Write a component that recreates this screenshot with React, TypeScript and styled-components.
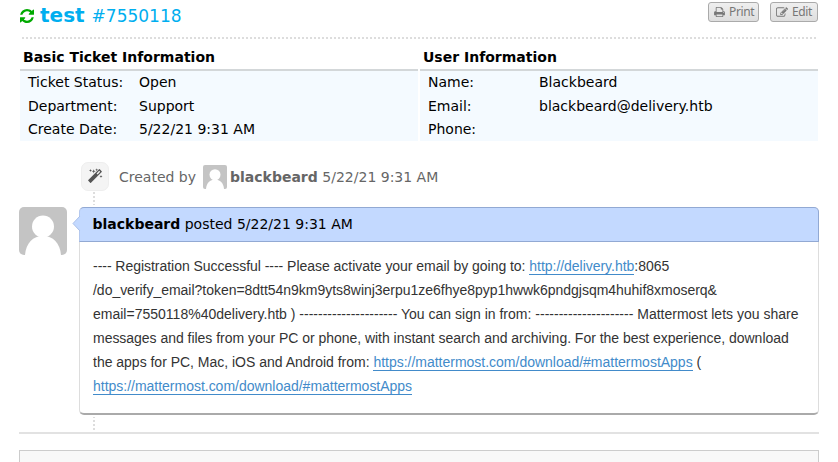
import React from 'react';
import styled, { createGlobalStyle } from 'styled-components';

const Global = createGlobalStyle`
  * { box-sizing: border-box; }
  body { margin: 0; background: #fff; color: #000; overflow: hidden; font: 14px/20px "DejaVu Sans", sans-serif; }
`;

const Page = styled.main`
  width: 838px;
  height: 462px;
  overflow: hidden;
  padding: 0 19px;
`;
const Header = styled.header`
  display: flex;
  align-items: flex-start;
  height: 37px;
`;
const RefreshIcon = styled.svg`
  width: 14px;
  height: 14px;
  margin: 9px 6px 0 1px;
  fill: #0a0;
`;
const Title = styled.h1`
  flex: 1;
  display: flex;
  align-items: baseline;
  gap: 7px;
  margin: 0;
  color: #00aeef;
  font-size: 20px;
  line-height: 30px;
`;
const TicketNumber = styled.small`
  font-size: 17px;
  font-weight: 400;
`;
const Button = styled.button<{ $width: number; $iconWidth: number }>`
  display: flex;
  align-items: center;
  width: ${(p) => p.$width}px;
  height: 20px;
  margin: 2px 1px 0 10px;
  padding: 0 0 0 5px;
  gap: 4px;
  border: 1px solid #aaa;
  border-radius: 3px;
  background: linear-gradient(#efefef, #dedede);
  color: #777;
  font: 12px/18px "Noto Sans", sans-serif;
  letter-spacing: -0.350px;
  svg { width: ${(p) => p.$iconWidth}px; height: 10px; margin-top: -1px; fill: currentColor; flex: none; }
`;
const DottedRule = styled.div`
  height: 2px;
  margin: 0 2px 0 3px;
  background: repeating-linear-gradient(90deg, #ddd 0 2px, transparent 2px 4px);
`;
const InfoGrid = styled.section`
  display: grid;
  grid-template-columns: 398px 398px;
  gap: 2px;
  margin: 8px 0 0 1px;
`;
const InfoTitle = styled.h2`
  height: 24px;
  margin: 0;
  padding-left: 3px;
  border-bottom: 2px solid #d3d7d9;
  font-size: 14px;
  line-height: 20px;
`;
const InfoList = styled.dl`
  display: grid;
  grid-template-columns: 111px 1fr;
  grid-template-rows: 24px 23px 23px;
  margin: 0;
  padding-left: 8px;
  background: #f4faff;
  line-height: 23px;
  dd { margin: 0; }
`;
const EventRow = styled.div`
  display: flex;
  align-items: center;
  height: 30px;
  margin: 21px 0 0 62px;
  color: #666;
  strong { margin: 0 4.500px 0 3px; }
`;
const EventBadge = styled.span`
  display: flex;
  align-items: center;
  justify-content: center;
  width: 28px;
  height: 29px;
  margin: -2px 10px 0 0;
  border: 1px solid #eee;
  border-radius: 7px;
  background: #f4f4f4;
  svg { width: 16px; height: 16px; fill: #555; margin-top: -1px; }
`;
const SmallAvatar = styled.svg`
  width: 24px;
  height: 24px;
  margin-left: 7px;
  border-radius: 2px;
`;
const ThreadLine = styled.div<{ $height: number; $top: number; $shift?: number }>`
  width: 2px;
  height: ${(p) => p.$height}px;
  margin: ${(p) => p.$top}px 0 0 74px;
  background: repeating-linear-gradient(#ddd 0 2px, transparent 2px 4px);
  background-position-y: ${(p) => p.$shift ?? 0}px;
`;
const Entry = styled.article`
  display: flex;
  align-items: flex-start;
  margin-top: 2px;
`;
const Avatar = styled.svg`
  width: 48px;
  height: 48px;
  margin-right: 12px;
  border-radius: 5px;
`;
const Message = styled.div`
  position: relative;
  width: 740px;
  height: 208px;
  border: 1px solid #ddd;
  border-top: 0;
  border-bottom: 2px solid #aaa;
  border-radius: 5px;
`;
const MessageHeader = styled.header`
  height: 35px;
  margin: 0 -1px;
  padding-left: 12.500px;
  border: 1px solid #92a9d3;
  border-left-color: #b4c8ee;
  border-radius: 5px 5px 0 0;
  background: #c3d9ff;
  line-height: 33px;
`;
const Pointer = styled.svg`
  position: absolute;
  left: -8px;
  top: 8px;
  width: 9px;
  height: 17px;
`;
const MessageBody = styled.div`
  padding: 12px 0 0 13px;
  color: #333;
  font: 14px/24px "Liberation Sans", sans-serif;
`;
const Line = styled.div<{ $spacing?: number }>`
  white-space: pre;
  letter-spacing: ${(p) => p.$spacing ?? 0}px;
`;
const Link = styled.a`
  color: #428bca;
  border-bottom: 1px solid #428bca;
  text-decoration: none;
`;
const Divider = styled.hr`
  height: 2px;
  margin: 2px 0 16px;
  border: 0;
  background: #e2e2e2;
`;
const ReplyPanel = styled.div`
  height: 30px;
  border: 1px solid #ccc;
  background: #f8f8f8;
`;

const Person = () => (
  <>
    <rect width="48" height="48" fill="#c4c4c4" />
    <circle cx="24" cy="19.5" r="11" fill="#fff" />
    <path d="M6 48C7 36 14 29 24 29s17 7 18 19z" fill="#fff" />
  </>
);

export default function App() {
  return (
    <>
      <Global />
      <Page>
        <Header>
          <RefreshIcon viewBox="0 0 1536 1536">
            <path d="M1511 928q0 5-1 7-64 268-268 434.5t-478 166.5q-146 0-282.5-55t-243.5-157l-129 129q-19 19-45 19t-45-19-19-45v-448q0-26 19-45t45-19h448q26 0 45 19t19 45-19 45l-137 137q71 66 161 102t187 36q134 0 250-65t186-179q11-17 53-117 8-23 30-23h192q13 0 22.500 9.500t9.500 22.500zm25-800v448q0 26-19 45t-45 19h-448q-26 0-45-19t-19-45 19-45l138-138q-148-137-349-137-134 0-250 65t-186 179q-11 17-53 117-8 23-30 23h-199q-13 0-22.500-9.500t-9.500-22.500v-7q65-268 270-434.500t480-166.500q146 0 284 55.500t245 156.500l130-129q19-19 45-19t45 19 19 45z" />
          </RefreshIcon>
          <Title>test <TicketNumber>#7550118</TicketNumber></Title>
          <Button $width={51} $iconWidth={11}>
            <svg viewBox="64 128 1664 1536"><path d="M448 1536h896v-256h-896v256zm0-640h896v-384h-160q-40 0-68-28t-28-68v-160h-640v640zm1152 64q0-26-19-45t-45-19-45 19-19 45 19 45 45 19 45-19 19-45zm128 0v416q0 13-9.500 22.500t-22.500 9.500h-224v160q0 40-28 68t-68 28h-960q-40 0-68-28t-28-68v-160h-224q-13 0-22.500-9.500t-9.500-22.500v-416q0-79 56.500-135.500t135.500-56.500h64v-544q0-40 28-68t68-28h672q40 0 88 20t76 48l152 152q28 28 48 76t20 88v256h64q79 0 135.500 56.500t56.500 135.500z" /></svg>
            Print
          </Button>
          <Button $width={48} $iconWidth={12}>
            <svg viewBox="0 128 1792 1408"><path d="M888 1184l116-116-152-152-116 116v56h96v96h56zm440-720q-16-16-33 1l-350 350q-17 17-1 33t33-1l350-350q17-17 1-33zm80 594v190q0 119-84.500 203.500t-203.500 84.500h-832q-119 0-203.500-84.500t-84.500-203.500v-832q0-119 84.500-203.500t203.500-84.500h832q63 0 117 25 15 7 18 23 3 17-9 29l-49 49q-14 14-32 8-23-6-45-6h-832q-66 0-113 47t-47 113v832q0 66 47 113t113 47h832q66 0 113-47t47-113v-126q0-13 9-22l64-64q15-15 35-7t20 29zm-96-738l288 288-672 672h-288v-288zm444 132l-92 92-288-288 92-92q28-28 68-28t68 28l152 152q28 28 28 68t-28 68z" /></svg>
            Edit
          </Button>
        </Header>
        <DottedRule />
        <InfoGrid>
          <div>
            <InfoTitle>Basic Ticket Information</InfoTitle>
            <InfoList>
              <dt>Ticket Status:</dt><dd>Open</dd>
              <dt>Department:</dt><dd>Support</dd>
              <dt>Create Date:</dt><dd>5/22/21 9:31 AM</dd>
            </InfoList>
          </div>
          <div>
            <InfoTitle>User Information</InfoTitle>
            <InfoList>
              <dt>Name:</dt><dd>Blackbeard</dd>
              <dt>Email:</dt><dd>blackbeard@delivery.htb</dd>
              <dt>Phone:</dt><dd />
            </InfoList>
          </div>
        </InfoGrid>
        <EventRow>
          <EventBadge>
            <svg viewBox="0 0 16 16">
              <path fillRule="evenodd" d="M12.800 1.300l1.900 1.900q.4.400 0 .8L4 14.700q-.4.400-.8 0l-1.900-1.900q-.4-.4 0-.8L12 1.300q.4-.4.800 0zM9.600 5.400l1 1L13.200 3.800l-1-1z" />
              <path d="M3.500 1l.4 1.100L5 2.500l-1.100.4L3.500 4l-.4-1.100L2 2.500l1.100-.4zM6.700 1.200l.5 1.600 1.600.5-1.600.5-.5 1.600-.5-1.600-1.600-.5 1.600-.5zM9.700.3l.4 1.100 1.100.4-1.100.4-.4 1.100-.4-1.100-1.100-.4 1.100-.4zM14 7l.4 1.100 1.100.4-1.100.4-.4 1.100-.4-1.100-1.100-.4 1.100-.4z" />
            </svg>
          </EventBadge>
          Created by
          <SmallAvatar viewBox="0 0 48 48"><Person /></SmallAvatar>
          <strong>blackbeard</strong>5/22/21 9:31 AM
        </EventRow>
        <ThreadLine $top={0} $height={13} />
        <Entry>
          <Avatar viewBox="0 0 48 48"><Person /></Avatar>
          <Message>
            <MessageHeader><strong>blackbeard</strong> posted 5/22/21 9:31 AM</MessageHeader>
            <Pointer viewBox="0 0 9 17">
              <path d="M9 0v17L1 8.500z" fill="#c3d9ff" />
              <path d="M8 1L1 8.500L8 16" fill="none" stroke="#a9c0ea" />
            </Pointer>
            <MessageBody>
              <Line $spacing={-0.034}>---- Registration Successful ---- Please activate your email by going to: <Link>http://delivery.htb</Link><span style={{ letterSpacing: 0 }}>:8065</span></Line>
              <Line $spacing={-0.025}>/do_verify_email?token=8dtt54n9km9yts8winj3erpu1ze6fhye8pyp1hwwk6pndgjsqm4huhif8xmoserq&amp;</Line>
              <Line $spacing={0.007}>email=7550118%40delivery.htb ) --------------------- You can sign in from: --------------------- Mattermost lets you share</Line>
              <Line $spacing={-0.028}>messages and files from your PC or phone, with instant search and archiving. For the best experience, download</Line>
              <Line $spacing={-0.012}>the apps for PC, Mac, iOS and Android from: <Link>https://mattermost.com/download/#mattermostApps</Link> (</Line>
              <Line $spacing={-0.015}><Link>https://mattermost.com/download/#mattermostApps</Link></Line>
            </MessageBody>
          </Message>
        </Entry>
        <ThreadLine $top={2} $height={13} $shift={-1} />
        <Divider />
        <ReplyPanel />
      </Page>
    </>
  );
}
